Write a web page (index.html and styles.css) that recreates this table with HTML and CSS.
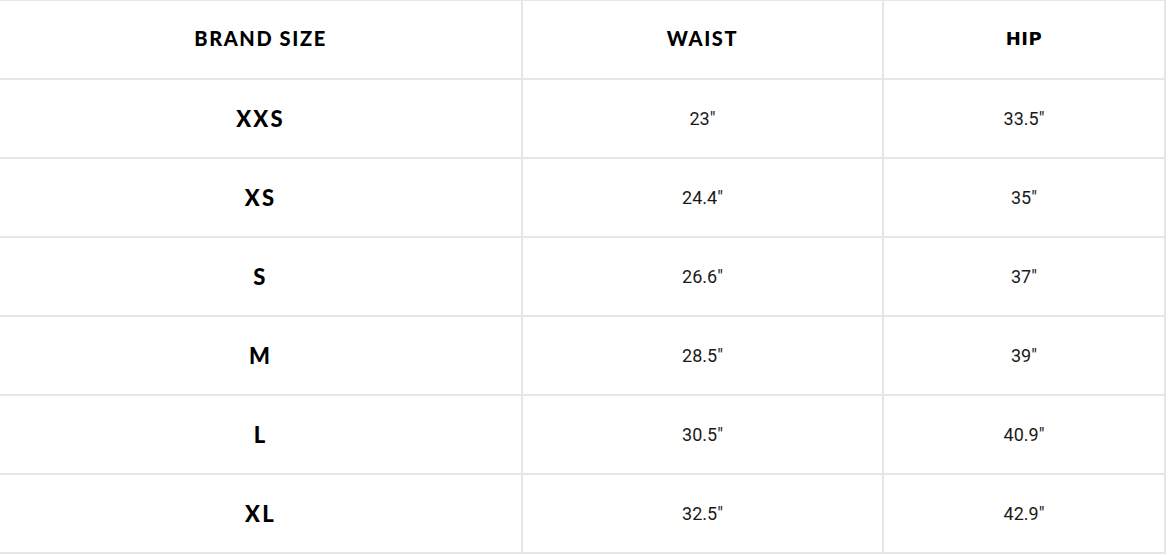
FILE: index.html
```html
<!DOCTYPE html>
<html lang="en">
<head>
<meta charset="utf-8">
<title>Size chart</title>
<link rel="stylesheet" href="styles.css">
</head>
<body>
<table class="size-table">
  <colgroup>
    <col class="col-size">
    <col class="col-waist">
    <col class="col-hip">
  </colgroup>
  <thead>
    <tr>
      <th class="head">BRAND SIZE</th>
      <th class="head">WAIST</th>
      <th class="head head-alt">HIP</th>
    </tr>
  </thead>
  <tbody>
    <tr><td class="size">XXS</td><td class="val">23"</td><td class="val">33.5"</td></tr>
    <tr><td class="size">XS</td><td class="val">24.4"</td><td class="val">35"</td></tr>
    <tr><td class="size">S</td><td class="val">26.6"</td><td class="val">37"</td></tr>
    <tr><td class="size">M</td><td class="val">28.5"</td><td class="val">39"</td></tr>
    <tr><td class="size">L</td><td class="val">30.5"</td><td class="val">40.9"</td></tr>
    <tr><td class="size">XL</td><td class="val">32.5"</td><td class="val">42.9"</td></tr>
  </tbody>
</table>
</body>
</html>
```
FILE: styles.css
```css
html, body {
  margin: 0;
  padding: 0;
  background: #ffffff;
}

.size-table {
  border-collapse: separate;
  border-spacing: 0;
  table-layout: fixed;
  width: 1166px;
  margin-top: -1px;
  border-top: 2px solid #e6e6e6;
}

.col-size { width: 523px; }
.col-waist { width: 361px; }
.col-hip { width: 282px; }

.size-table th,
.size-table td {
  height: 77px;
  padding: 0;
  text-align: center;
  vertical-align: middle;
  border-right: 2px solid #e6e6e6;
  border-bottom: 2px solid #e6e6e6;
  box-sizing: content-box;
}

.size-table th.head {
  font-family: "Lato", "Noto Sans", sans-serif;
  font-weight: 900;
  font-size: 20px;
  letter-spacing: 1.6px;
  color: #000;
  height: 74px;
  padding-bottom: 3px;
}

.size-table th.head-alt {
  font-family: "DejaVu Sans", sans-serif;
  font-weight: 700;
  font-size: 18px;
  letter-spacing: 0.5px;
}

.size {
  font-family: "Lato", "Noto Sans", sans-serif;
  font-weight: 900;
  font-size: 22px;
  letter-spacing: 2.2px;
  color: #000;
}

.val {
  font-family: "Roboto", "Liberation Sans", sans-serif;
  font-weight: 400;
  font-size: 18px;
  color: #1a1a1a;
}
```
